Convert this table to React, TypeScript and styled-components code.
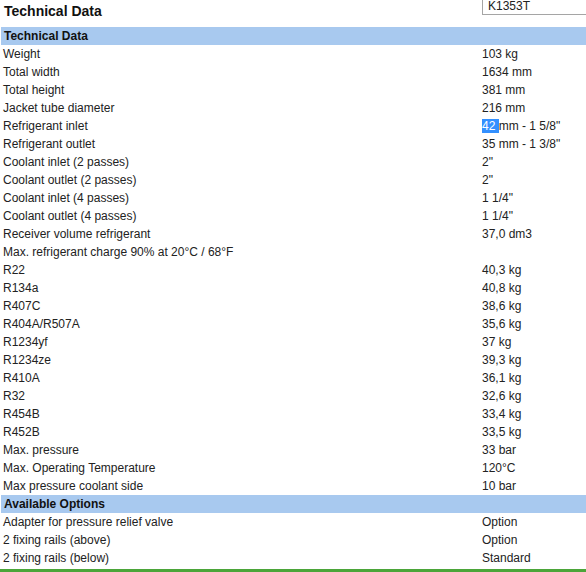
import React from "react";
import styled, { createGlobalStyle } from "styled-components";

const Global = createGlobalStyle`
  html, body { margin: 0; padding: 0; background: #fff; overflow: hidden; }
  body { font-family: "Liberation Sans", Arial, sans-serif; color: #222; }
`;

const Page = styled.div`
  width: 586px;
  height: 572px;
  overflow: hidden;
  position: relative;
`;

const TopBar = styled.div`
  display: grid;
  grid-template-columns: 482px 1fr;
  height: 27px;
`;

const Title = styled.h1`
  margin: 0;
  padding: 3px 0 0 4px;
  font-size: 14px;
  line-height: 17px;
  font-weight: bold;
  color: #111;
`;

const CodeInput = styled.div`
  margin-top: -5px;
  height: 20px;
  width: 140px;
  border: 1px solid #a5a5a5;
  box-sizing: border-box;
  padding: 3px 0 0 5px;
  font-size: 12px;
  line-height: 14px;
  color: #222;
`;

const Table = styled.div`
  display: grid;
  grid-template-columns: 482px 1fr;
`;

const Cell = styled.div<{ $head?: boolean }>`
  height: 18px;
  line-height: 18px;
  font-size: 12px;
  white-space: nowrap;
  background: ${(p) => (p.$head ? "#a8c9ef" : "transparent")};
  font-weight: ${(p) => (p.$head ? "bold" : "normal")};
  color: ${(p) => (p.$head ? "#111" : "#222")};
`;

const LabelCell = styled(Cell)`
  padding-left: 3px;
  margin-left: ${(p) => (p.$head ? "1px" : "0")};
`;

const Sel = styled.span`
  background: #3390ff;
  color: #fff;
`;

const BottomLine = styled.div`
  position: absolute;
  left: 0;
  right: 0;
  bottom: 0;
  height: 3px;
  background: #4ba539;
`;

type Row = { label: string; value?: React.ReactNode; head?: boolean };

const rows: Row[] = [
  { label: "Technical Data", head: true },
  { label: "Weight", value: "103 kg" },
  { label: "Total width", value: "1634 mm" },
  { label: "Total height", value: "381 mm" },
  { label: "Jacket tube diameter", value: "216 mm" },
  {
    label: "Refrigerant inlet",
    value: (
      <>
        <Sel>42 </Sel>mm - 1 5/8"
      </>
    ),
  },
  { label: "Refrigerant outlet", value: '35 mm - 1 3/8"' },
  { label: "Coolant inlet (2 passes)", value: '2"' },
  { label: "Coolant outlet (2 passes)", value: '2"' },
  { label: "Coolant inlet (4 passes)", value: '1 1/4"' },
  { label: "Coolant outlet (4 passes)", value: '1 1/4"' },
  { label: "Receiver volume refrigerant", value: "37,0 dm3" },
  { label: "Max. refrigerant charge 90% at 20°C / 68°F", value: "" },
  { label: "R22", value: "40,3 kg" },
  { label: "R134a", value: "40,8 kg" },
  { label: "R407C", value: "38,6 kg" },
  { label: "R404A/R507A", value: "35,6 kg" },
  { label: "R1234yf", value: "37 kg" },
  { label: "R1234ze", value: "39,3 kg" },
  { label: "R410A", value: "36,1 kg" },
  { label: "R32", value: "32,6 kg" },
  { label: "R454B", value: "33,4 kg" },
  { label: "R452B", value: "33,5 kg" },
  { label: "Max. pressure", value: "33 bar" },
  { label: "Max. Operating Temperature", value: "120°C" },
  { label: "Max pressure coolant side", value: "10 bar" },
  { label: "Available Options", head: true },
  { label: "Adapter for pressure relief valve", value: "Option" },
  { label: "2 fixing rails (above)", value: "Option" },
  { label: "2 fixing rails (below)", value: "Standard" },
];

export default function App() {
  return (
    <Page>
      <Global />
      <TopBar>
        <Title>Technical Data</Title>
        <CodeInput>K1353T</CodeInput>
      </TopBar>
      <Table>
        {rows.map((r, i) => (
          <React.Fragment key={i}>
            <LabelCell $head={r.head}>{r.label}</LabelCell>
            <Cell $head={r.head}>{r.value}</Cell>
          </React.Fragment>
        ))}
      </Table>
      <BottomLine />
    </Page>
  );
}
